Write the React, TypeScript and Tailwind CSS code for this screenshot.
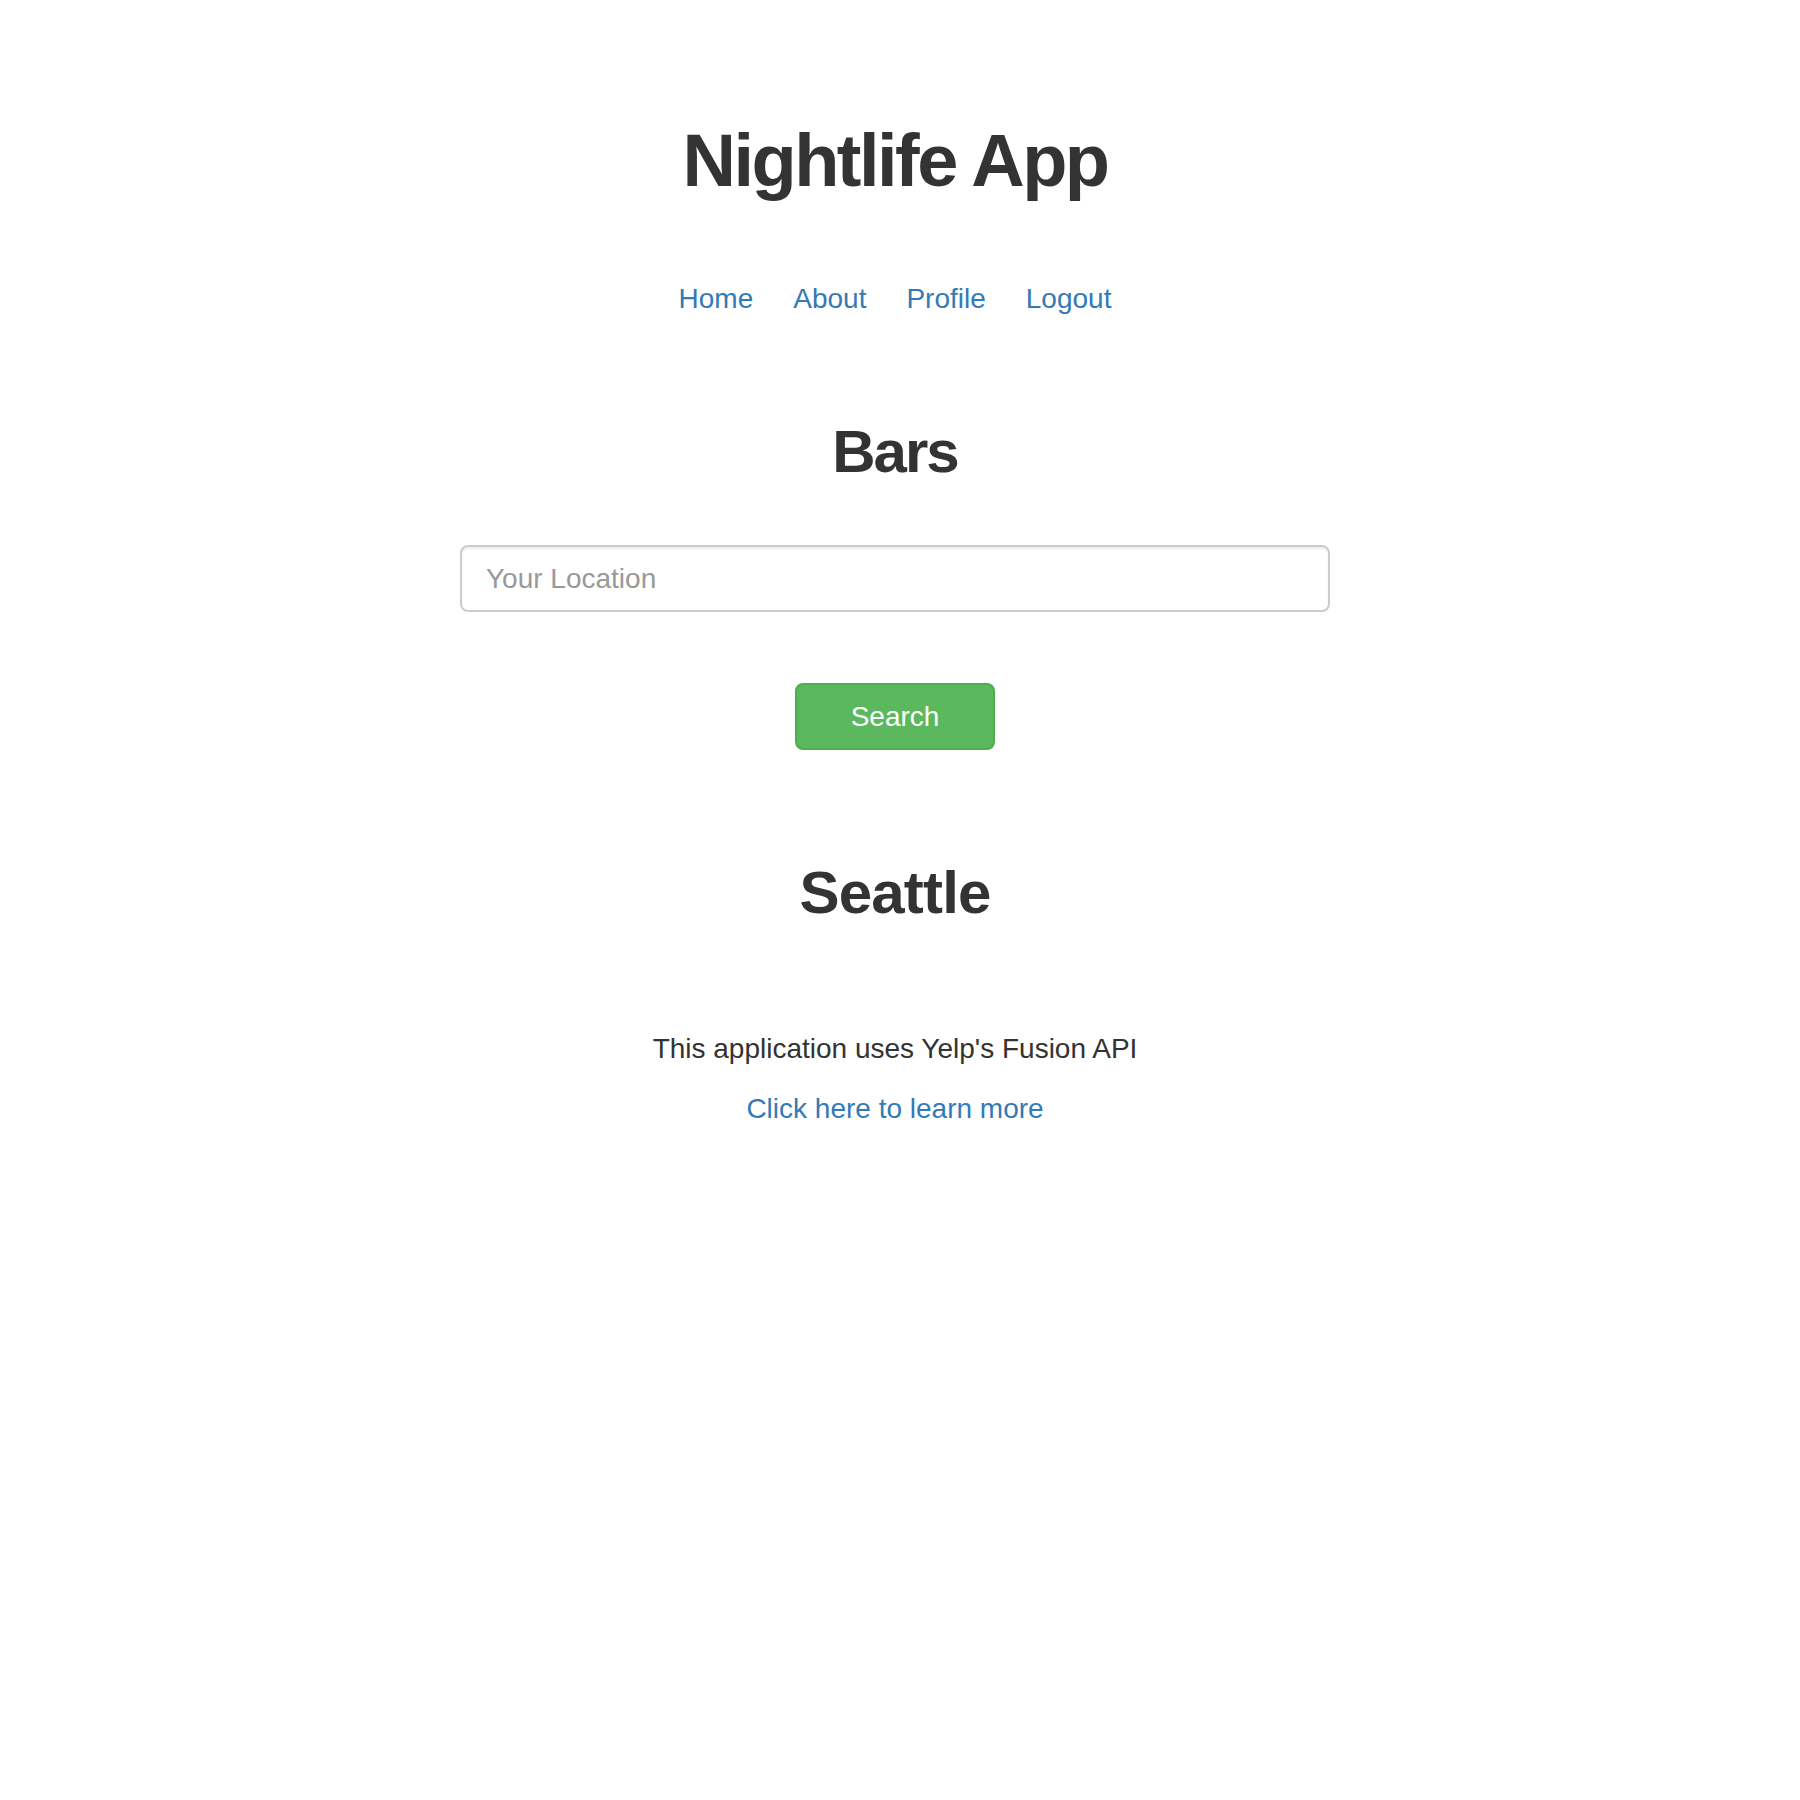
import { useState } from "react";

const links = ["Home", "About", "Profile", "Logout"];

export default function App() {
  const [location, setLocation] = useState("");

  return (
    <div className="min-h-screen bg-white pr-[10px] font-['Liberation_Sans',Arial,sans-serif] text-[#333]">
      <div className="flex flex-col items-center pt-[121px]">
        {/* Header */}
        <h1 className="text-[74px] leading-[80px] font-bold tracking-[-2.5px]">Nightlife App</h1>

        <nav className="mt-[78px] flex gap-10 text-[28px] leading-[40px]">
          {links.map((l) => (
            <a key={l} href="#" className="text-[#337ab7] hover:underline">
              {l}
            </a>
          ))}
        </nav>

        {/* Search */}
        <h2 className="mt-[100px] text-[60px] leading-[66px] font-bold tracking-[-2px]">Bars</h2>

        <input
          type="text"
          value={location}
          onChange={(e) => setLocation(e.target.value)}
          placeholder="Your Location"
          className="mt-[60px] h-[67px] w-[870px] rounded-[8px] border-2 border-[#ccc] px-[24px] text-[28px] text-[#555] placeholder:text-[#999] shadow-[inset_0_2px_2px_rgba(0,0,0,0.075)] outline-none"
        />

        <button className="mt-[71px] h-[67px] w-[200px] rounded-[8px] border-2 border-[#4cae4c] bg-[#5cb85c] text-[28px] text-white">
          Search
        </button>

        <h2 className="mt-[110px] text-[60px] leading-[66px] font-bold tracking-[-0.8px]">Seattle</h2>

        {/* Footer */}
        <p className="mt-[103px] text-[28px] leading-[40px]">This application uses Yelp's Fusion API</p>
        <a href="#" className="mt-[20px] text-[28px] leading-[40px] text-[#337ab7] hover:underline">
          Click here to learn more
        </a>
      </div>
    </div>
  );
}
